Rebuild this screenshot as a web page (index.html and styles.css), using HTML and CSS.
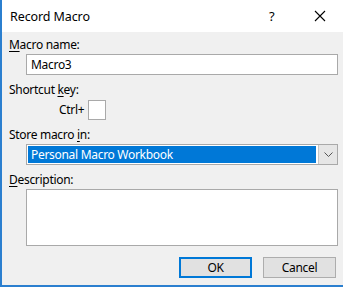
FILE: index.html
```html
<!DOCTYPE html>
<html lang="en">
<head>
<meta charset="UTF-8">
<meta name="viewport" content="width=device-width, initial-scale=1.0">
<title>Record Macro</title>
<link rel="stylesheet" href="styles.css">
</head>
<body>
<div class="dialog">
  <div class="titlebar">
    <span class="title">Record Macro</span>
    <span class="help">?</span>
    <span class="close">
      <svg width="12" height="12" viewBox="0 0 12 12"><path d="M1 1 L11 11 M11 1 L1 11" stroke="#000" stroke-width="1.1" fill="none"/></svg>
    </span>
  </div>

  <div class="content">
    <div class="label"><u>M</u>acro name:</div>
    <div class="field name-field">Macro3</div>

    <div class="label gap">Shortcut <u>k</u>ey:</div>
    <div class="shortcut">
      <span>Ctrl+</span>
      <span class="keybox"></span>
    </div>

    <div class="label gap">Store macro <u>i</u>n:</div>
    <div class="select">
      <span class="selected">Personal Macro Workbook</span>
      <span class="arrow">
        <svg width="9" height="6" viewBox="0 0 9 6"><path d="M0.5 0.5 L4.5 4.5 L8.5 0.5" stroke="#555" stroke-width="1" fill="none"/></svg>
      </span>
    </div>

    <div class="label gap"><u>D</u>escription:</div>
    <div class="field desc-field"></div>

    <div class="buttons">
      <div class="btn btn-ok">OK</div>
      <div class="btn">Cancel</div>
    </div>
  </div>
</div>
</body>
</html>
```

FILE: styles.css
```css
body, html {
  margin: 0;
  background: #fff;
}

.dialog {
  width: 341px;
  height: 285px;
  border-left: 2px solid #2b7fcf;
  border-bottom: 2px solid #2b7fcf;
  background: #f0f0f0;
  font-family: "Noto Sans", "Open Sans", sans-serif;
  font-size: 12px;
  color: #000;
  display: flex;
  flex-direction: column;
}

.titlebar {
  height: 32px;
  background: #fff;
  display: flex;
  align-items: center;
  padding-left: 8px;
}

.title {
  flex: 1;
  font-size: 12.5px;
  letter-spacing: -0.1px;
}

.help {
  width: 12px;
  margin-right: 33px;
  font-size: 13px;
}

.close {
  display: flex;
  margin-right: 17px;
}

.content {
  padding: 5px 5px 0 7px;
  display: flex;
  flex-direction: column;
  letter-spacing: -0.3px;
}

.label {
  height: 15px;
  line-height: 15px;
}

.label u {
  text-decoration-thickness: 1px;
  text-underline-offset: 2px;
}

.label.gap {
  margin-top: 7px;
}

.field {
  margin: 2px 0 0 17px;
  background: #fff;
  border: 1px solid #a9a9a9;
  box-sizing: border-box;
}

.name-field {
  height: 21px;
  line-height: 19px;
  padding-left: 4px;
}

.desc-field {
  height: 57px;
}

.shortcut {
  margin: 2px 0 0 50px;
  display: flex;
  align-items: center;
  gap: 4px;
  height: 21px;
}

.keybox {
  width: 18px;
  height: 20px;
  background: #fff;
  border: 1px solid #a9a9a9;
  box-sizing: border-box;
}

.select {
  margin: 2px 0 0 17px;
  height: 21px;
  border: 1px solid #a9a9a9;
  box-sizing: border-box;
  background: #fff;
  display: flex;
  padding: 1px 0 1px 1px;
}

.selected {
  flex: 1;
  background: #0078d7;
  color: #fff;
  line-height: 17px;
  padding-left: 3px;
}

.arrow {
  width: 18px;
  margin: -1px 0 -1px 2px;
  background: #e6e6e6;
  border-left: 1px solid #c5c5c5;
  display: flex;
  align-items: center;
  justify-content: center;
}

.buttons {
  margin-top: 11px;
  display: flex;
  justify-content: flex-end;
  gap: 11px;
  padding-right: 2px;
}

.btn {
  width: 73px;
  height: 21px;
  box-sizing: border-box;
  background: #e1e1e1;
  border: 1px solid #adadad;
  display: flex;
  align-items: center;
  justify-content: center;
}

.btn-ok {
  border: 2px solid #0078d7;
}
```
